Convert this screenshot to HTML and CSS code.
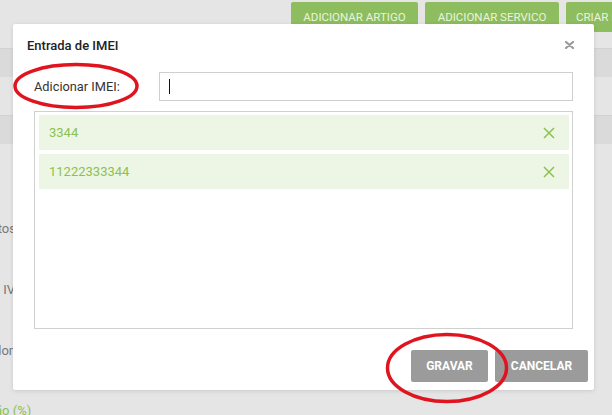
FILE: index.html
```html
<!DOCTYPE html>
<html lang="pt">
<head>
<meta charset="utf-8">
<title>Entrada de IMEI</title>
<link rel="stylesheet" href="styles.css">
</head>
<body>
<div class="page">
  <div class="toolbar">
    <span class="gbtn">ADICIONAR ARTIGO</span>
    <span class="gbtn">ADICIONAR SERVICO</span>
    <span class="gbtn">CRIAR DOCUMENTO</span>
  </div>
  <div class="gap g1"></div>
  <div class="band"></div>
  <div class="gap g2"></div>
  <div class="band"></div>
  <div class="side">
    <div class="lbl"><span>Descontos</span></div>
    <div class="lbl lbl-wide"><span>Taxa de IVA</span></div>
    <div class="lbl"><span>Salon</span></div>
  </div>
  <div class="foot">Retenção (%)</div>
</div>

<div class="modal">
  <div class="modal-head">
    <span class="modal-title">Entrada de IMEI</span>
    <svg class="close" width="9" height="8" viewBox="0 0 9 8"><path d="M1 1 L8 7 M8 1 L1 7" stroke="#9a9a9a" stroke-width="2.2" stroke-linecap="round"/></svg>
  </div>
  <div class="field">
    <label class="field-label">Adicionar IMEI:</label>
    <div class="input"><span class="caret"></span></div>
  </div>
  <div class="list">
    <div class="item"><span>3344</span><svg class="x" width="12" height="12" viewBox="0 0 12 12"><path d="M1 1 L11 11 M11 1 L1 11" stroke="#8cc152" stroke-width="1.5"/></svg></div>
    <div class="item"><span>11222333344</span><svg class="x" width="12" height="12" viewBox="0 0 12 12"><path d="M1 1 L11 11 M11 1 L1 11" stroke="#8cc152" stroke-width="1.5"/></svg></div>
  </div>
  <div class="modal-foot">
    <button class="btn">GRAVAR</button>
    <button class="btn">CANCELAR</button>
  </div>
</div>

<svg class="marks" width="612" height="415" viewBox="0 0 612 415">
  <ellipse cx="76" cy="86" rx="61" ry="21.5" fill="none" stroke="#e0141e" stroke-width="3.5"/>
  <ellipse cx="447" cy="368" rx="59.5" ry="33.5" fill="none" stroke="#e0141e" stroke-width="3.5"/>
</svg>
</body>
</html>
```

FILE: styles.css
```css
* { box-sizing: border-box; }
html, body { margin: 0; padding: 0; }
body {
  width: 612px;
  height: 415px;
  overflow: hidden;
  background: #e5e5e5;
  font-family: Roboto, "Liberation Sans", sans-serif;
  position: relative;
}
.page {
  display: flex;
  flex-direction: column;
  height: 415px;
}
.toolbar {
  display: flex;
  gap: 7px;
  padding: 2px 0 0 291px;
  height: 32px;
  white-space: nowrap;
  overflow: hidden;
  flex: none;
}
.gbtn {
  flex: none;
  display: flex;
  align-items: center;
  justify-content: center;
  height: 30px;
  padding: 0 10px;
  background: #8dbd5e;
  color: #e9f4de;
  font-size: 11.5px;
  border-radius: 2px;
}
.gbtn:nth-child(1) { width: 127px; }
.gbtn:nth-child(2) { width: 134px; }
.gap { flex: none; }
.g1 { height: 17px; border-bottom: 1px solid #d2d2d2; }
.g2 { height: 39px; border-bottom: 1px solid #d2d2d2; }
.band { flex: none; height: 28px; background: #dadada; }
.side {
  display: flex;
  flex-direction: column;
  gap: 46px;
  width: 16px;
  margin-top: 77px;
  flex: none;
}
.lbl {
  display: flex;
  justify-content: flex-end;
  font-size: 13px;
  line-height: 15px;
  color: #777;
  white-space: nowrap;
}
.lbl span { flex: none; }
.lbl-wide { margin-right: -7px; }
.foot {
  margin-top: auto;
  margin-left: -45px;
  height: 12px;
  font-size: 13px;
  line-height: 15px;
  color: #8cc152;
  white-space: nowrap;
  overflow: visible;
}

.modal {
  position: absolute;
  left: 13px;
  top: 24px;
  width: 581px;
  height: 366px;
  background: #fff;
  border-radius: 2px;
  box-shadow: 0 1px 4px rgba(0,0,0,0.12);
  display: flex;
  flex-direction: column;
  padding: 0 21px 8px 21px;
}
.modal-head {
  display: flex;
  align-items: center;
  justify-content: space-between;
  margin: 0 -1px 0 -7px;
  padding-top: 4px;
  height: 40px;
}
.modal-title {
  font-size: 13px;
  font-weight: 500;
  color: #222;
  line-height: 18px;
}
.close { display: block; margin-top: -2px; }
.field {
  display: flex;
  align-items: center;
  margin-top: 8px;
  height: 29px;
}
.field-label {
  width: 125px;
  font-size: 12.8px;
  color: #333;
  flex: none;
}
.input {
  flex: 1;
  height: 29px;
  border: 1px solid #cfcfcf;
  display: flex;
  align-items: center;
  padding-left: 9px;
}
.caret {
  width: 1px;
  height: 15px;
  background: #111;
}
.list {
  margin-top: 10px;
  height: 218px;
  border: 1px solid #d0d0d0;
  padding: 3px 3px 3px 4px;
  display: flex;
  flex-direction: column;
  gap: 4px;
}
.item {
  height: 35px;
  background: #edf6e4;
  display: flex;
  align-items: center;
  justify-content: space-between;
  padding: 0 14px 0 10px;
  font-size: 13px;
  color: #8cc152;
}
.x { display: block; }
.modal-foot {
  margin-top: auto;
  margin-right: -15px;
  display: flex;
  justify-content: flex-end;
  gap: 7px;
}
.btn {
  height: 32px;
  border: none;
  border-radius: 2px;
  background: #9b9b9b;
  color: #fff;
  font-family: Roboto, "Liberation Sans", sans-serif;
  font-weight: 700;
  font-size: 12px;
  padding: 0;
}
.btn:nth-child(1) { width: 77px; }
.btn:nth-child(2) { width: 93px; }

.marks {
  position: absolute;
  left: 0;
  top: 0;
  pointer-events: none;
}
```
